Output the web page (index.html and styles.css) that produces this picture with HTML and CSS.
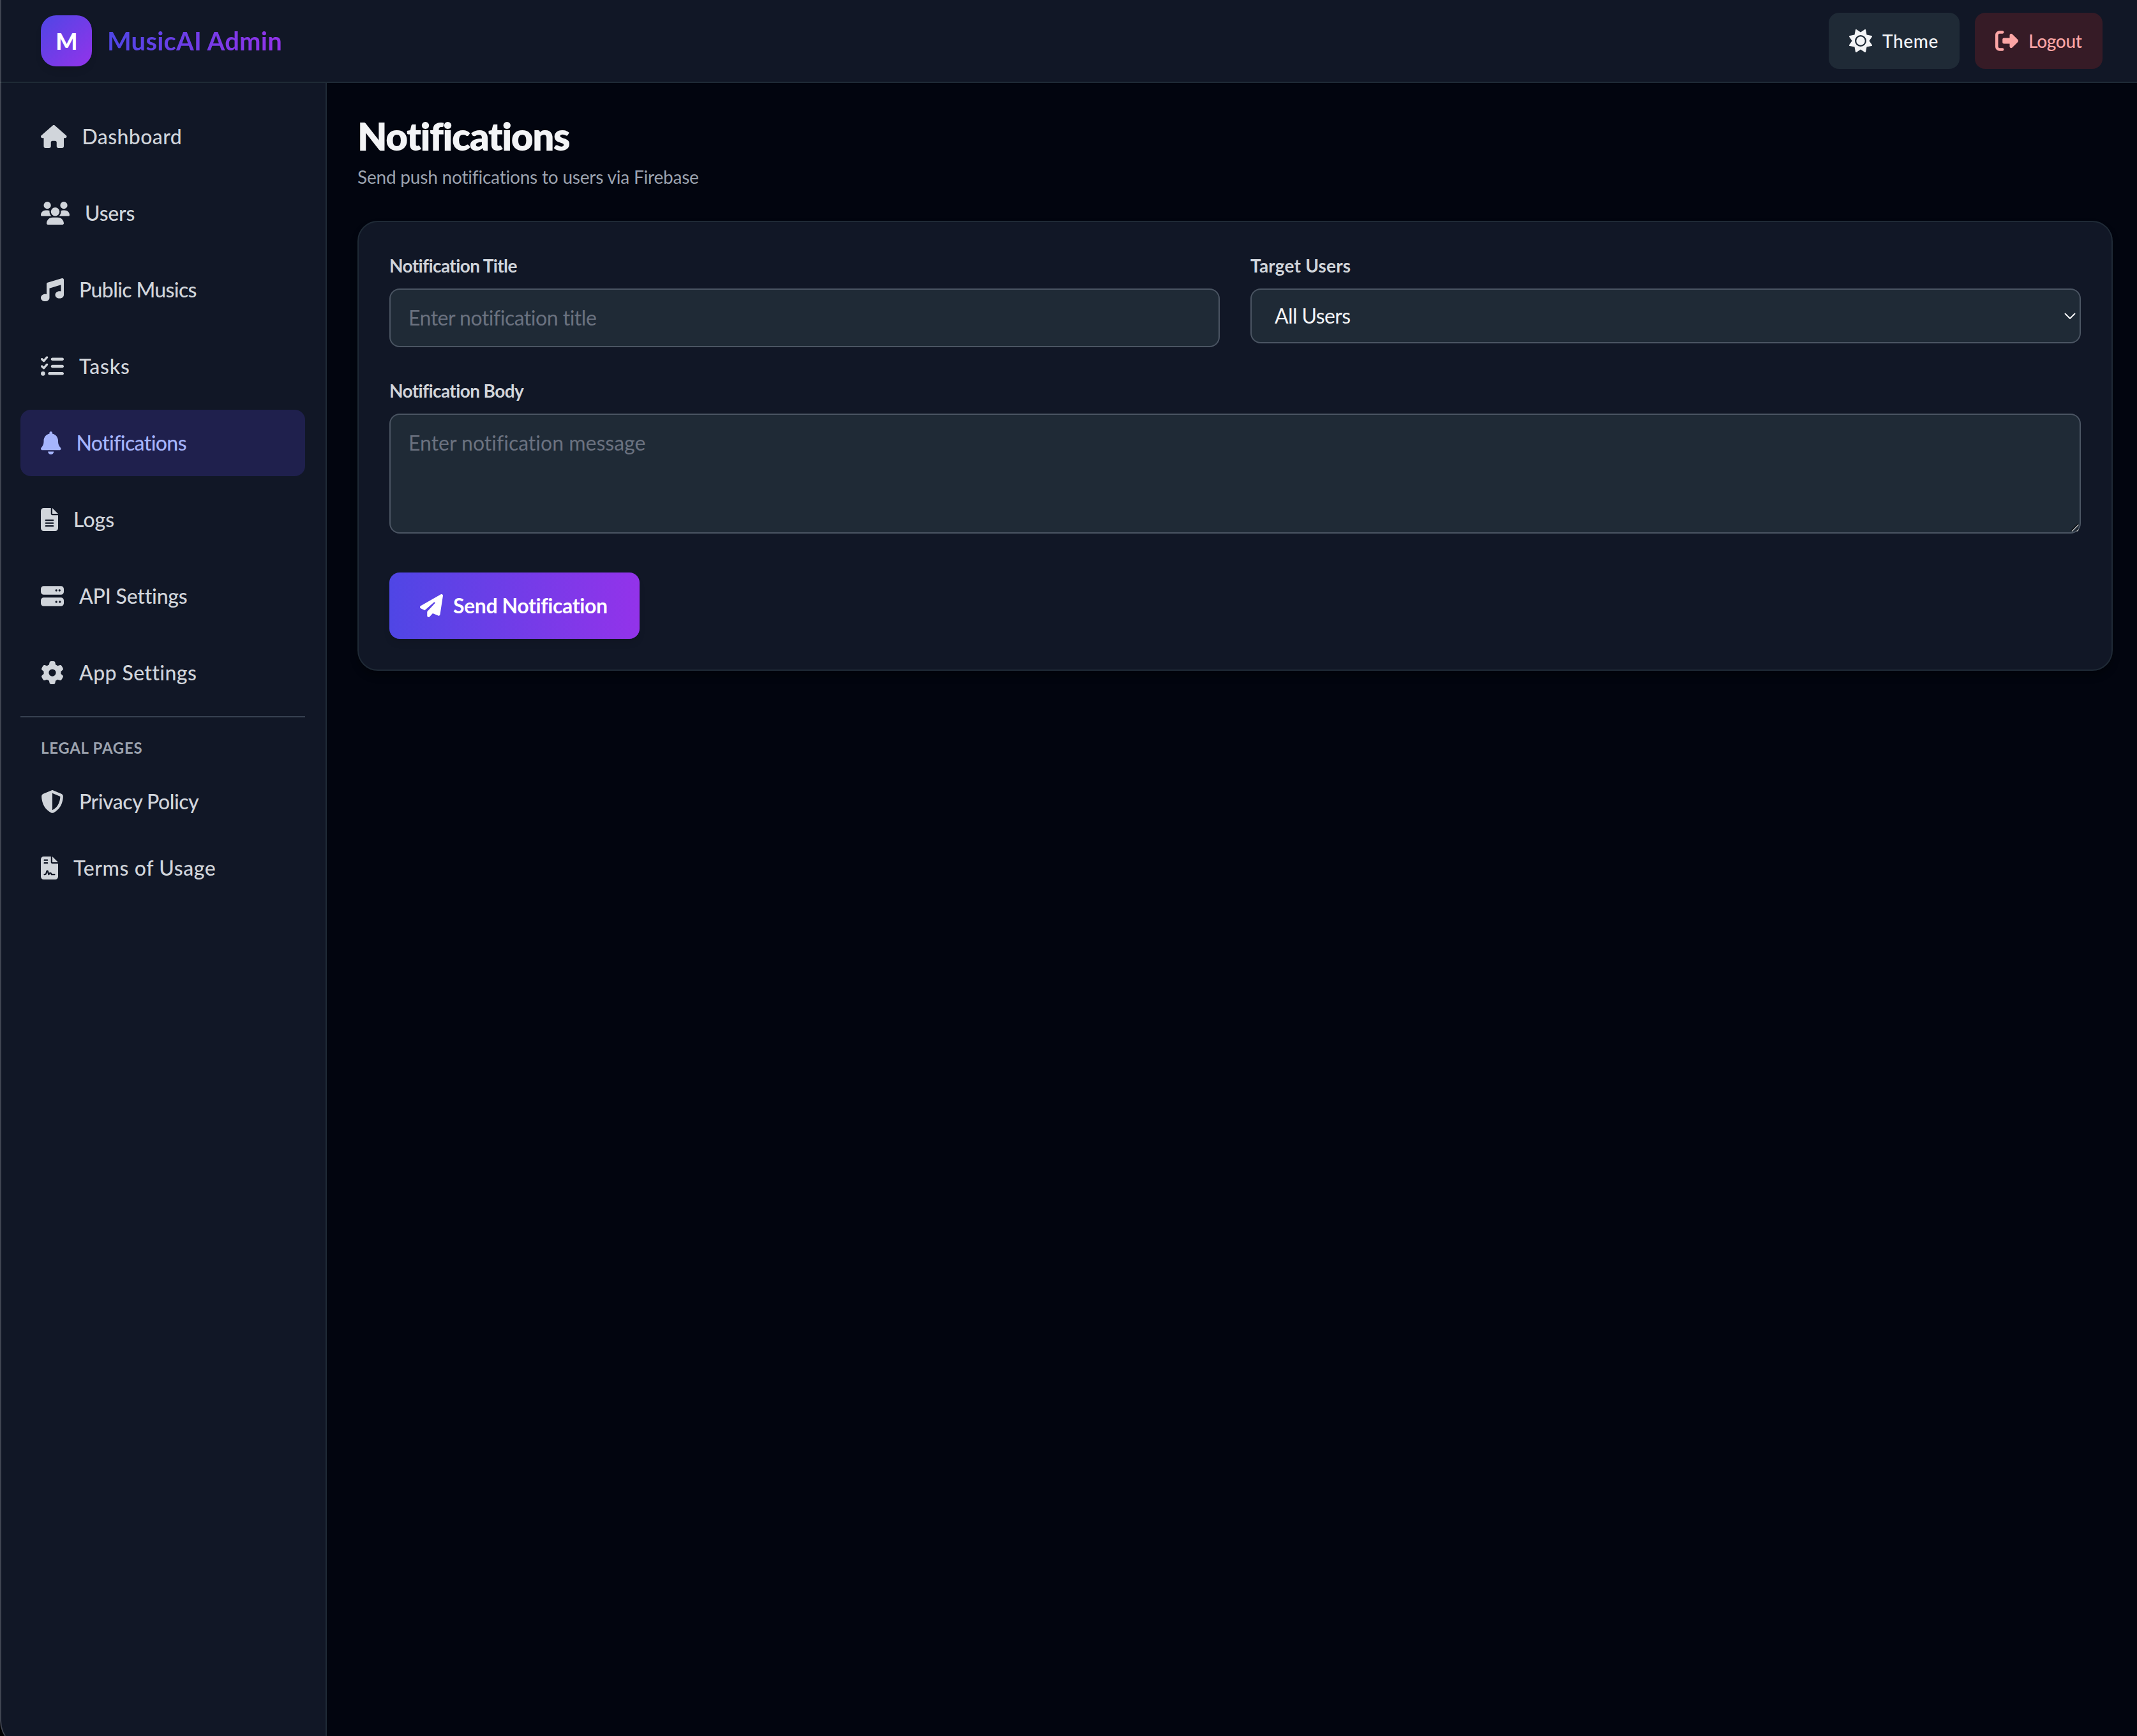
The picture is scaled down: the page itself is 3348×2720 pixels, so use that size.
FILE: index.html
```html
<!DOCTYPE html>
<html lang="en">
<head>
    <meta charset="UTF-8">
    <meta name="viewport" content="width=device-width, initial-scale=1.0">
    <title>MusicAI Admin - Notifications</title>
    <link rel="stylesheet" href="styles.css">
</head>
<body>
    <header class="topbar">
        <div class="brand">
            <div class="logo">M</div>
            <span class="brand-name">MusicAI Admin</span>
        </div>
        <div class="topbar-actions">
            <button type="button" class="top-btn theme-btn">
                <svg class="icon" viewBox="0 0 512 512"><path d="M361.5 1.2c5 2.1 8.6 6.6 9.6 11.9L391 121l107.9 19.8c5.3 1 9.8 4.6 11.9 9.6s1.5 10.7-1.6 15.2L446.9 256l62.3 90.3c3.1 4.5 3.7 10.2 1.6 15.2s-6.6 8.6-11.9 9.6L391 391 371.1 498.9c-1 5.3-4.6 9.8-9.6 11.9s-10.7 1.5-15.2-1.6L256 446.9l-90.3 62.3c-4.5 3.1-10.2 3.7-15.2 1.6s-8.6-6.6-9.6-11.9L121 391 13.1 371.1c-5.3-1-9.8-4.6-11.9-9.6s-1.5-10.7 1.6-15.2L65.1 256 2.8 165.7c-3.1-4.5-3.7-10.2-1.6-15.2s6.6-8.6 11.9-9.6L121 121 140.9 13.1c1-5.3 4.6-9.8 9.6-11.9s10.7-1.5 15.2 1.6L256 65.1 346.3 2.8c4.5-3.1 10.2-3.7 15.2-1.6zM160 256a96 96 0 1 1 192 0 96 96 0 1 1 -192 0zm224 0a128 128 0 1 0 -256 0 128 128 0 1 0 256 0z"/></svg>
                <span class="theme-text">Theme</span>
            </button>
            <button type="button" class="top-btn logout-btn">
                <svg class="icon" viewBox="0 0 512 512"><path d="M377.9 105.9L500.7 228.7c7.2 7.2 11.3 17.1 11.3 27.3s-4.1 20.1-11.3 27.3L377.9 406.1c-6.4 6.4-15 9.9-24 9.9c-18.7 0-33.9-15.2-33.9-33.9l0-62.1-128 0c-17.7 0-32-14.3-32-32l0-64c0-17.7 14.3-32 32-32l128 0 0-62.1c0-18.7 15.2-33.9 33.9-33.9c9 0 17.6 3.6 24 9.9zM160 96L96 96c-17.7 0-32 14.3-32 32l0 256c0 17.7 14.3 32 32 32l64 0c17.7 0 32 14.3 32 32s-14.3 32-32 32l-64 0c-53 0-96-43-96-96L0 128C0 75 43 32 96 32l64 0c17.7 0 32 14.3 32 32s-14.3 32-32 32z"/></svg>
                <span class="logout-text">Logout</span>
            </button>
        </div>
    </header>

    <div class="layout">
        <aside class="sidebar">
            <nav class="nav">
                <a href="#" class="nav-link">
                    <svg class="icon icon-home" viewBox="0 0 576 512"><path d="M575.8 255.5c0 18-15 32.1-32 32.1h-32l.7 160.2c0 2.7-.2 5.4-.5 8.1V472c0 22.1-17.9 40-40 40H456c-1.1 0-2.2 0-3.3-.1c-1.4 .1-2.8 .1-4.2 .1H416 392c-22.1 0-40-17.9-40-40V448 384c0-17.7-14.3-32-32-32H256c-17.7 0-32 14.3-32 32v64 24c0 22.1-17.9 40-40 40H160 128.1c-1.5 0-3-.1-4.5-.2c-1.2 .1-2.4 .2-3.6 .2H104c-22.1 0-40-17.9-40-40V360c0-.9 0-1.9 .1-2.8V287.6H32c-18 0-32-14-32-32.1c0-9 3-17 10-24L266.4 8c7-7 15-8 22-8s15 2 21 7L564.8 231.5c8 7 12 15 11 24z"/></svg>
                    <span class="t-dashboard">Dashboard</span>
                </a>
                <a href="#" class="nav-link">
                    <svg class="icon icon-users" viewBox="0 0 640 512"><path d="M144 0a80 80 0 1 1 0 160A80 80 0 1 1 144 0zM512 0a80 80 0 1 1 0 160A80 80 0 1 1 512 0zM0 298.7C0 239.8 47.8 192 106.7 192h42.7c15.9 0 31 3.5 44.6 9.7c-1.3 7.2-1.9 14.7-1.9 22.3c0 38.2 16.8 72.5 43.3 96c-.2 0-.4 0-.7 0H21.3C9.6 320 0 310.4 0 298.7zM405.3 320c-.2 0-.4 0-.7 0c26.6-23.5 43.3-57.8 43.3-96c0-7.6-.7-15-1.9-22.3c13.6-6.3 28.7-9.7 44.6-9.7h42.7C592.2 192 640 239.8 640 298.7c0 11.8-9.6 21.3-21.3 21.3H405.3zM224 224a96 96 0 1 1 192 0 96 96 0 1 1 -192 0zM128 485.3C128 411.7 187.7 352 261.3 352H378.7C452.3 352 512 411.7 512 485.3c0 14.7-11.9 26.7-26.7 26.7H154.7c-14.7 0-26.7-11.9-26.7-26.7z"/></svg>
                    <span class="t-users">Users</span>
                </a>
                <a href="#" class="nav-link">
                    <svg class="icon" viewBox="0 0 512 512"><path d="M499.1 6.3c8.1 6 12.9 15.6 12.9 25.7v72V368c0 44.2-43 80-96 80s-96-35.8-96-80s43-80 96-80c11.2 0 22 1.6 32 4.6V147L192 223.8V432c0 44.2-43 80-96 80s-96-35.8-96-80s43-80 96-80c11.2 0 22 1.6 32 4.6V200 128c0-14.1 9.3-26.6 22.8-30.7l320-96c9.7-2.9 20.2-1.1 28.3 5z"/></svg>
                    <span class="t-musics">Public Musics</span>
                </a>
                <a href="#" class="nav-link">
                    <svg class="icon" viewBox="0 0 512 512"><path d="M152.1 38.2c9.9 8.9 10.7 24 1.8 33.9l-72 80c-4.4 4.9-10.6 7.8-17.2 7.9s-12.9-2.4-17.6-7L7 113C-2.3 103.6-2.3 88.4 7 79s24.6-9.4 33.9 0l22.1 22.1 55.1-61.2c8.9-9.9 24-10.7 33.9-1.8zm0 160c9.9 8.9 10.7 24 1.8 33.9l-72 80c-4.4 4.9-10.6 7.8-17.2 7.9s-12.9-2.4-17.6-7L7 273c-9.4-9.4-9.4-24.6 0-33.9s24.6-9.4 33.9 0l22.1 22.1 55.1-61.2c8.9-9.9 24-10.7 33.9-1.8zM224 96c0-17.7 14.3-32 32-32H480c17.7 0 32 14.3 32 32s-14.3 32-32 32H256c-17.7 0-32-14.3-32-32zm0 160c0-17.7 14.3-32 32-32H480c17.7 0 32 14.3 32 32s-14.3 32-32 32H256c-17.7 0-32-14.3-32-32zM160 416c0-17.7 14.3-32 32-32H480c17.7 0 32 14.3 32 32s-14.3 32-32 32H192c-17.7 0-32-14.3-32-32zM48 368a48 48 0 1 1 0 96 48 48 0 1 1 0-96z"/></svg>
                    <span class="t-tasks">Tasks</span>
                </a>
                <a href="#" class="nav-link active">
                    <svg class="icon icon-bell" viewBox="0 0 448 512"><path d="M224 0c-17.7 0-32 14.3-32 32V51.2C119 66 64 130.6 64 208v18.8c0 47-17.3 92.4-48.5 127.6l-7.4 8.3c-8.4 9.4-10.4 22.9-5.3 34.4S19.4 416 32 416H416c12.6 0 24-7.4 29.2-18.9s3.1-25-5.3-34.4l-7.4-8.3C401.3 319.2 384 273.9 384 226.8V208c0-77.4-55-142-128-156.8V32c0-17.7-14.3-32-32-32zm45.3 493.3c12-12 18.7-28.3 18.7-45.3H224 160c0 17 6.7 33.3 18.7 45.3s28.3 18.7 45.3 18.7s33.3-6.7 45.3-18.7z"/></svg>
                    <span class="t-notifications">Notifications</span>
                </a>
                <a href="#" class="nav-link">
                    <svg class="icon icon-file" viewBox="0 0 384 512"><path d="M64 0C28.7 0 0 28.7 0 64V448c0 35.3 28.7 64 64 64H320c35.3 0 64-28.7 64-64V160H256c-17.7 0-32-14.3-32-32V0H64zM256 0V128H384L256 0zM112 256H272c8.8 0 16 7.2 16 16s-7.2 16-16 16H112c-8.8 0-16-7.2-16-16s7.2-16 16-16zm0 64H272c8.8 0 16 7.2 16 16s-7.2 16-16 16H112c-8.8 0-16-7.2-16-16s7.2-16 16-16zm0 64H272c8.8 0 16 7.2 16 16s-7.2 16-16 16H112c-8.8 0-16-7.2-16-16s7.2-16 16-16z"/></svg>
                    <span class="t-logs">Logs</span>
                </a>
                <a href="#" class="nav-link">
                    <svg class="icon" viewBox="0 0 512 512"><path d="M64 32C28.7 32 0 60.7 0 96v64c0 35.3 28.7 64 64 64H448c35.3 0 64-28.7 64-64V96c0-35.3-28.7-64-64-64H64zm280 72a24 24 0 1 1 0 48 24 24 0 1 1 0-48zm48 24a24 24 0 1 1 48 0 24 24 0 1 1 -48 0zM64 288c-35.3 0-64 28.7-64 64v64c0 35.3 28.7 64 64 64H448c35.3 0 64-28.7 64-64V352c0-35.3-28.7-64-64-64H64zm280 72a24 24 0 1 1 0 48 24 24 0 1 1 0-48zm56 24a24 24 0 1 1 48 0 24 24 0 1 1 -48 0z"/></svg>
                    <span class="t-api">API Settings</span>
                </a>
                <a href="#" class="nav-link">
                    <svg class="icon" viewBox="0 0 512 512"><path d="M495.9 166.6c3.2 8.7 .5 18.4-6.4 24.6l-43.3 39.4c1.1 8.3 1.7 16.8 1.7 25.4s-.6 17.1-1.7 25.4l43.3 39.4c6.9 6.2 9.6 15.9 6.4 24.6c-4.4 11.9-9.7 23.3-15.8 34.3l-4.7 8.1c-6.6 11-14 21.4-22.1 31.2c-5.9 7.2-15.7 9.6-24.5 6.8l-55.7-17.7c-13.4 10.3-28.2 18.9-44 25.4l-12.5 57.1c-2 9.1-9 16.3-18.2 17.8c-13.8 2.3-28 3.5-42.5 3.5s-28.7-1.2-42.5-3.5c-9.2-1.5-16.2-8.7-18.2-17.8l-12.5-57.1c-15.8-6.5-30.6-15.1-44-25.4L83.1 425.9c-8.8 2.8-18.6 .3-24.5-6.8c-8.1-9.8-15.5-20.2-22.1-31.2l-4.7-8.1c-6.1-11-11.4-22.4-15.8-34.3c-3.2-8.7-.5-18.4 6.4-24.6l43.3-39.4C64.6 273.1 64 264.6 64 256s.6-17.1 1.7-25.4L22.4 191.2c-6.9-6.2-9.6-15.9-6.4-24.6c4.4-11.9 9.7-23.3 15.8-34.3l4.7-8.1c6.6-11 14-21.4 22.1-31.2c5.9-7.2 15.7-9.6 24.5-6.8l55.7 17.7c13.4-10.3 28.2-18.9 44-25.4l12.5-57.1c2-9.1 9-16.3 18.2-17.8C227.3 1.2 241.5 0 256 0s28.7 1.2 42.5 3.5c9.2 1.5 16.2 8.7 18.2 17.8l12.5 57.1c15.8 6.5 30.6 15.1 44 25.4l55.7-17.7c8.8-2.8 18.6-.3 24.5 6.8c8.1 9.8 15.5 20.2 22.1 31.2l4.7 8.1c6.1 11 11.4 22.4 15.8 34.3zM256 336a80 80 0 1 0 0-160 80 80 0 1 0 0 160z"/></svg>
                    <span class="t-app">App Settings</span>
                </a>
            </nav>

            <div class="legal">
                <p class="legal-title">LEGAL PAGES</p>
                <a href="#" class="nav-link">
                    <svg class="icon" viewBox="0 0 512 512"><path d="M256 0c4.6 0 9.2 1 13.4 2.9L457.7 82.8c22 9.3 38.4 31 38.3 57.2c-.5 99.2-41.3 280.7-213.6 363.2c-16.7 8-36.1 8-52.8 0C57.3 420.7 16.5 239.2 16 140c-.1-26.2 16.3-47.9 38.3-57.2L242.7 2.9C246.8 1 251.4 0 256 0zm0 66.8V444.8C394 378 431.1 230.1 432 141.4L256 66.8l0 0z"/></svg>
                    <span class="t-privacy">Privacy Policy</span>
                </a>
                <a href="#" class="nav-link">
                    <svg class="icon icon-file" viewBox="0 0 384 512"><path d="M64 0C28.7 0 0 28.7 0 64V448c0 35.3 28.7 64 64 64H320c35.3 0 64-28.7 64-64V160H256c-17.7 0-32-14.3-32-32V0H64zM256 0V128H384L256 0zM80 64h64c8.8 0 16 7.2 16 16s-7.2 16-16 16H80c-8.8 0-16-7.2-16-16s7.2-16 16-16zm0 64h64c8.8 0 16 7.2 16 16s-7.2 16-16 16H80c-8.8 0-16-7.2-16-16s7.2-16 16-16zm54.2 253.8c-6.1 20.3-24.8 34.2-46 34.2H80c-8.8 0-16-7.2-16-16s7.2-16 16-16h8.2c7.1 0 13.3-4.6 15.3-11.4l14.9-49.5c3.4-11.3 13.8-19.1 25.6-19.1s22.2 7.7 25.6 19.1l11.6 38.6c7.4-6.2 16.8-9.7 26.8-9.7c15.9 0 30.4 9 37.5 23.2l4.4 8.8H304c8.8 0 16 7.2 16 16s-7.2 16-16 16H240c-6.1 0-11.6-3.4-14.3-8.8l-8.8-17.7c-1.7-3.4-5.1-5.5-8.8-5.5s-7.2 2.1-8.8 5.5l-8.8 17.7c-2.9 5.9-9.2 9.4-15.7 8.8s-12.1-5.1-13.9-11.3L144 349l-9.8 32.8z"/></svg>
                    <span class="t-terms">Terms of Usage</span>
                </a>
            </div>
        </aside>

        <main class="content">
            <h1>Notifications</h1>
            <p class="subtitle">Send push notifications to users via Firebase</p>

            <form class="card" id="notificationForm">
                <div class="form-row">
                    <div class="form-group">
                        <label for="title">Notification Title</label>
                        <input type="text" id="title" name="title" placeholder="Enter notification title">
                    </div>
                    <div class="form-group">
                        <label for="target" class="target-label">Target Users</label>
                        <div class="select-wrap">
                            <select id="target" name="target">
                                <option value="all">All Users</option>
                            </select>
                            <svg class="chevron" viewBox="0 0 18 10"><path d="M1 1l8 8 8-8"/></svg>
                        </div>
                    </div>
                </div>
                <div class="form-group">
                    <label for="body" class="body-label">Notification Body</label>
                    <div class="textarea-wrap">
                        <textarea id="body" name="body" placeholder="Enter notification message"></textarea>
                        <svg class="grip" viewBox="0 0 14 14"><path class="grip-shade" d="M1 11.500L11.500 1M8.500 12L12 8.500"/><path d="M2 12.500L12.500 2M9.500 12.500L12.500 9.500"/></svg>
                    </div>
                </div>
                <button type="submit" class="send-btn">
                    <svg class="icon" viewBox="0 0 512 512"><path d="M498.1 5.6c10.1 7 15.4 19.1 13.5 31.2l-64 416c-1.5 9.7-7.4 18.2-16 23s-18.9 5.4-28 1.6L284 427.7l-68.5 74.1c-8.9 9.7-22.9 12.9-35.2 8.1S160 493.2 160 480V396.4c0-4 1.5-7.8 4.2-10.7L331.8 202.8c5.8-6.3 5.6-16-.4-22s-15.7-6.4-22-.7L106 360.8 17.7 316.6C7.1 311.3 .3 300.7 0 288.9s5.9-22.8 16.1-28.7l448-256c10.7-6.1 23.9-5.5 34 1.4z"/></svg>
                    <span class="send-text">Send Notification</span>
                </button>
            </form>
        </main>
    </div>
    <div class="window-edge"></div>
</body>
</html>
```

FILE: styles.css
```css
* {
    box-sizing: border-box;
}
body {
    margin: 0;
    height: 100vh;
    display: flex;
    flex-direction: column;
    overflow: hidden;
    font-family: Lato, "Open Sans", sans-serif;
    font-size: 32px;
    line-height: 48px;
    font-variant-ligatures: none;
    background: #02050f;
    color: #f3f4f6;
}
h1, p {
    margin: 0;
}
button, input, select, textarea {
    font-family: inherit;
    font-variant-ligatures: none;
}
.icon {
    width: 36px;
    height: 36px;
    flex-shrink: 0;
    fill: currentColor;
}
.icon-home {
    width: 40.5px;
}
.icon-users {
    width: 45px;
}
.icon-bell {
    width: 31.5px;
}
.icon-file {
    width: 27px;
}

/* top bar */
.topbar {
    height: 130px;
    flex-shrink: 0;
    display: flex;
    align-items: center;
    justify-content: space-between;
    padding: 0 54px 0 64px;
    background: #111726;
    border-bottom: 2px solid #1f2a36;
}
.brand {
    display: flex;
    align-items: center;
    gap: 24px;
}
.logo {
    width: 80px;
    height: 80px;
    border-radius: 24px;
    display: flex;
    align-items: center;
    justify-content: center;
    background: linear-gradient(135deg, #4f46e5, #9333ea);
    box-shadow: 0 8px 12px -2px rgba(0,0,0,0.1);
    color: white;
    font-size: 36px;
    font-weight: 900;
    letter-spacing: -1px;
}
.brand-name {
    font-size: 40px;
    font-weight: 700;
    letter-spacing: 0.2px;
    background: linear-gradient(90deg, #4f46e5, #9333ea);
    -webkit-background-clip: text;
    background-clip: text;
    color: transparent;
}
.topbar-actions {
    display: flex;
    gap: 24px;
}
.top-btn {
    height: 88px;
    display: flex;
    align-items: center;
    gap: 16px;
    padding: 0 0 0 32px;
    border: none;
    border-radius: 16px;
    font-size: 28px;
    font-weight: 500;
    cursor: pointer;
}
.theme-btn {
    width: 205px;
    background: #1f2a36;
    color: #f3f4f6;
}
.theme-text {
    letter-spacing: 0.6px;
}
.logout-btn {
    width: 200px;
    background: #361b26;
    color: #fca5a5;
}
.logout-text {
    letter-spacing: -0.3px;
}

/* sidebar */
.layout {
    flex: 1;
    display: flex;
    min-height: 0;
}
.sidebar {
    width: 512px;
    flex-shrink: 0;
    padding: 32px;
    background: #111726;
    border-right: 2px solid #1f2a36;
}
.nav {
    display: flex;
    flex-direction: column;
    gap: 16px;
}
.nav-link {
    height: 104px;
    display: flex;
    align-items: center;
    gap: 24px;
    padding: 0 32px;
    border-radius: 16px;
    color: #d1d5db;
    font-weight: 500;
    text-decoration: none;
    white-space: nowrap;
}
.nav-link.active {
    background: #1f204d;
    color: #a5b4fc;
}
.t-dashboard, .t-app {
    letter-spacing: 0.4px;
}
.t-users, .t-api {
    letter-spacing: -0.2px;
}
.t-musics, .t-notifications {
    letter-spacing: -0.65px;
}
.t-tasks {
    letter-spacing: 0.8px;
}
.t-privacy {
    letter-spacing: -0.5px;
}
.t-terms {
    letter-spacing: 0.6px;
}
.legal {
    margin-top: 16px;
    padding-top: 32px;
    border-top: 2px solid #374151;
}
.legal-title {
    padding: 0 32px;
    margin-bottom: 16px;
    font-size: 24px;
    line-height: 32px;
    font-weight: 700;
    letter-spacing: 0.7px;
    color: #9ca3af;
}

/* main content */
.content {
    flex: 1;
    padding: 47px 38px 48px 48px;
}
h1 {
    font-size: 60px;
    line-height: 72px;
    font-weight: 800;
    letter-spacing: -1.5px;
}
.subtitle {
    margin: 8px 0 49px;
    font-size: 28px;
    line-height: 40px;
    letter-spacing: -0.2px;
    color: #9ca3af;
}
.card {
    height: 705px;
    padding: 48px;
    background: #111726;
    border: 2px solid #1f2a36;
    border-radius: 32px;
    box-shadow: 0 8px 12px rgba(0,0,0,0.3);
}
.form-row {
    display: grid;
    grid-template-columns: 1fr 1fr;
    gap: 48px;
    margin-bottom: 48px;
}
label {
    display: block;
    margin-bottom: 16px;
    font-size: 28px;
    line-height: 40px;
    font-weight: 700;
    letter-spacing: -0.6px;
    color: #d1d5db;
}
.target-label {
    letter-spacing: 0.2px;
}
input, select, textarea {
    display: block;
    width: 100%;
    margin: 0;
    border: 2px solid #4b5563;
    border-radius: 16px;
    outline: none;
    background: #1f2a36;
    color: #f3f4f6;
    font-size: 32px;
    line-height: 48px;
}
input {
    height: 92px;
    padding: 0 28px 2px;
    letter-spacing: -0.5px;
}
select {
    height: 86px;
    padding: 0 36px;
    letter-spacing: -0.6px;
    appearance: none;
}
textarea {
    height: 188px;
    padding: 20px 28px;
    resize: none;
}
input::placeholder, textarea::placeholder {
    color: #6b7280;
    opacity: 1;
}
.select-wrap, .textarea-wrap {
    position: relative;
}
.chevron {
    position: absolute;
    right: 8px;
    top: 38px;
    width: 18px;
    height: 10px;
    fill: none;
    stroke: #f3f4f6;
    stroke-width: 2;
}
.grip {
    position: absolute;
    right: 2px;
    bottom: 2px;
    width: 14px;
    height: 14px;
    fill: none;
    stroke: #b4b6b8;
    stroke-width: 1.6;
}
.grip-shade {
    stroke: #05070a;
}
.send-btn {
    width: 392px;
    height: 104px;
    margin-top: 61px;
    padding: 0 0 0 48px;
    display: flex;
    align-items: center;
    gap: 16px;
    border: none;
    border-radius: 16px;
    background: linear-gradient(90deg, #4f46e5, #9333ea);
    box-shadow: 0 8px 12px -2px rgba(0,0,0,0.1);
    color: white;
    font-size: 32px;
    font-weight: 700;
    letter-spacing: -0.4px;
    white-space: nowrap;
    cursor: pointer;
}
.send-text {
    padding-bottom: 2px;
}

/* rounded window frame on the left side */
.window-edge {
    position: fixed;
    inset: 0 0 -20px 0;
    border-left: 2px solid rgba(255,255,255,0.2);
    border-bottom-left-radius: 44px;
    box-shadow: 0 0 0 40px #000;
    pointer-events: none;
}
```
